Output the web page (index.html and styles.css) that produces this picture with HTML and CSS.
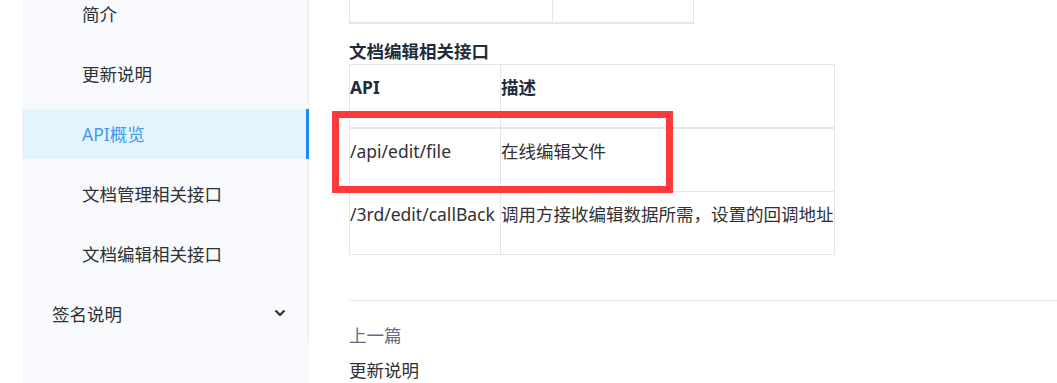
FILE: index.html
```html
<!DOCTYPE html>
<html lang="zh-CN">
<head>
<meta charset="utf-8">
<title>API概览</title>
<link rel="stylesheet" href="styles.css">
</head>
<body>
<div class="page">
  <aside class="aside">
    <ul class="menu">
      <li class="item sub">简介</li>
      <li class="item sub">更新说明</li>
      <li class="item sub active">API概览</li>
      <li class="item sub">文档管理相关接口</li>
      <li class="item sub">文档编辑相关接口</li>
      <li class="item top">
        <span>签名说明</span>
        <svg class="chev" width="12" height="8" viewBox="0 0 12 8"><path d="M1.5 1.5 L6 6 L10.5 1.5" fill="none" stroke="#303133" stroke-width="2.2"/></svg>
      </li>
    </ul>
  </aside>
  <main class="main">
    <table class="tbl tbl-top">
      <colgroup><col class="c-a"><col class="c-b"></colgroup>
      <tr><td></td><td></td></tr>
    </table>
    <h3 class="heading">文档编辑相关接口</h3>
    <div class="tbl-wrap">
      <table class="tbl tbl-api">
        <colgroup><col class="c-1"><col class="c-2"></colgroup>
        <thead>
          <tr><th>API</th><th>描述</th></tr>
        </thead>
        <tbody>
          <tr><td>/api/edit/file</td><td>在线编辑文件</td></tr>
          <tr><td>/3rd/edit/callBack</td><td>调用方接收编辑数据所需，设置的回调地址</td></tr>
        </tbody>
      </table>
      <div class="mark"></div>
    </div>
    <hr class="divider">
    <div class="prev-label">上一篇</div>
    <div class="prev-link">更新说明</div>
  </main>
</div>
</body>
</html>
```
FILE: styles.css
```css
html, body {
  margin: 0;
  padding: 0;
  background: #ffffff;
  font-family: "Noto Sans", "Noto Sans CJK SC", sans-serif;
  font-size: 17.5px;
  color: #303133;
  overflow: hidden;
}

.page {
  display: flex;
  height: 383px;
}

.aside {
  width: 287px;
  margin-left: 22px;
  background: #f7f9fc;
  flex: none;
}

.menu {
  list-style: none;
  margin: -11px 0 0 0;
  padding: 0 0 4px 0;
  border-right: 1px solid #e8eaee;
  display: flex;
  flex-direction: column;
  gap: 10px;
}

.item {
  height: 50px;
  line-height: 50px;
  position: relative;
  color: #303133;
  white-space: nowrap;
}

.item.sub {
  padding-left: 60px;
}

.item.top {
  padding-left: 30px;
  padding-right: 22px;
  display: flex;
  justify-content: space-between;
  align-items: center;
}

.chev {
  margin-top: -2px;
}

.item.active {
  background: #e4f4fd;
  color: #3d9bf4;
  margin-right: -1px;
}

.item.active::after {
  content: "";
  position: absolute;
  top: 0;
  right: 0;
  width: 3px;
  height: 100%;
  background: #1a8cf5;
}

.main {
  flex: 1;
  padding-left: 40px;
  min-width: 0;
}

.tbl {
  border-collapse: collapse;
  table-layout: fixed;
}

.tbl td, .tbl th {
  border: 1px solid #e6e6e6;
  padding: 0;
  text-align: left;
  vertical-align: top;
}

.tbl-top {
  width: 344px;
}

.tbl-top .c-a { width: 203px; }
.tbl-top .c-b { width: 141px; }

.tbl-top td {
  border-top: none;
  border-bottom: 2px solid #e6e6e6;
  height: 22px;
}

.heading {
  margin: 14px 0 0 0;
  font-size: 17.5px;
  line-height: 26px;
  font-weight: 700;
  color: #1f2d3d;
}

.tbl-wrap {
  position: relative;
}

.tbl-api {
  width: 485px;
}

.tbl-api .c-1 { width: 151px; }
.tbl-api .c-2 { width: 334px; }

.tbl-api th {
  font-weight: 700;
  color: #1f2d3d;
  height: 53px;
  padding-top: 9px;
  line-height: 26px;
  border-bottom: 2px solid #e6e6e6;
}

.tbl-api td {
  height: 28px;
  padding-top: 9px;
  padding-bottom: 25px;
  line-height: 26px;
  color: #303133;
  white-space: nowrap;
  overflow: visible;
}

.mark {
  position: absolute;
  left: -17px;
  top: 47px;
  width: 327px;
  height: 68px;
  border: 7px solid #fc3a3a;
  pointer-events: none;
}

.divider {
  border: none;
  border-top: 1px solid #e6e6e6;
  margin: 45px 0 0 0;
  height: 0;
}

.prev-label {
  margin-top: 22px;
  line-height: 24px;
  color: #5e6d82;
}

.prev-link {
  margin-top: 11px;
  line-height: 24px;
  color: #303133;
}
```
